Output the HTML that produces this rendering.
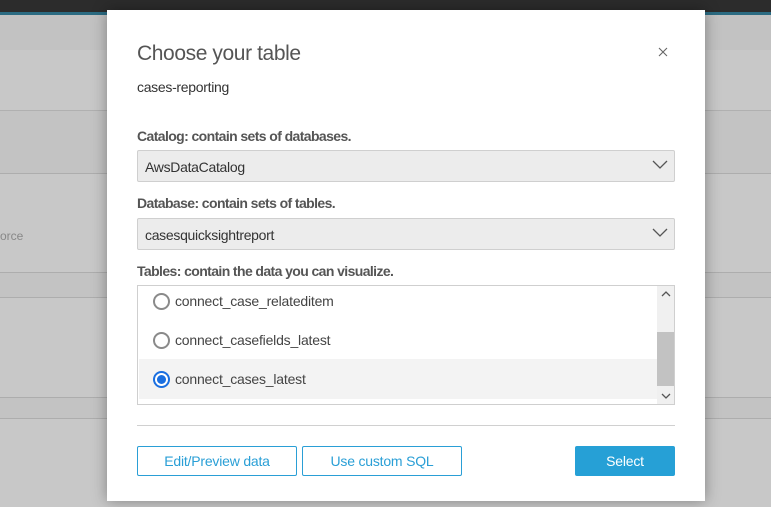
<!DOCTYPE html>
<html><head><meta charset="utf-8"><style>
*{margin:0;padding:0;box-sizing:border-box}
body{width:771px;height:507px;overflow:hidden;position:relative;background:#c8c8c8;font-family:"Liberation Sans",sans-serif;color:#444}
.a{position:absolute}
.sel{position:absolute;left:137px;width:538px;height:32px;background:#ececec;border:1px solid #cfcfcf;border-radius:2px;font-size:14px;color:#333;padding:8px 7px;letter-spacing:-0.3px}
.lbl{position:absolute;left:137px;font-size:14px;font-weight:bold;color:#555;letter-spacing:-0.6px}
.chev{position:absolute;right:6px;top:9px}
.row{position:absolute;left:1px;width:519px;height:40px;font-size:14px;color:#444;padding:0 0 0 36px;line-height:40px;letter-spacing:-0.2px}
.rad{position:absolute;left:14px;top:12px;width:17px;height:17px;border-radius:50%;border:2px solid #8a8a8a;background:#fff}
.btn{position:absolute;top:446px;height:30px;border:1px solid #2a9fd6;border-radius:2px;color:#2a9fd6;font-size:14px;text-align:center;line-height:28px;background:#fff;letter-spacing:-0.2px}
</style></head><body>
<div class="a" style="left:0;top:0;width:771px;height:12px;background:#2c2c2c"></div>
<div class="a" style="left:0;top:12px;width:771px;height:3px;background:#2b6b82"></div>
<div class="a" style="left:0;top:15px;width:771px;height:35px;background:#c2c2c2"></div>
<div class="a" style="left:0;top:110px;width:771px;height:63px;background:#c3c3c3;border-top:1px solid #b0b0b0"></div>
<div class="a" style="left:0;top:173px;width:771px;height:1px;background:#adadad"></div>
<div class="a" style="left:0;top:272px;width:771px;height:26px;background:#c3c3c3;border-top:1px solid #adadad;border-bottom:1px solid #adadad"></div>
<div class="a" style="left:0;top:397px;width:771px;height:22px;background:#c3c3c3;border-top:1px solid #adadad;border-bottom:1px solid #adadad"></div>
<div class="a" style="left:0;top:229px;font-size:12px;color:#888">orce</div>
<div class="a" style="left:107px;top:10px;width:598px;height:491px;background:#fff;box-shadow:0 0 14px rgba(0,0,0,.35)">
</div>
<div class="a" style="left:137px;top:42px;font-size:21px;color:#555;letter-spacing:-0.4px">Choose your table</div>
<svg class="a" style="left:658px;top:47px" width="10" height="10"><path d="M1 1L9 9M9 1L1 9" stroke="#666" stroke-width="1.1"/></svg>
<div class="a" style="left:137px;top:79px;font-size:14px;color:#333;letter-spacing:-0.3px">cases-reporting</div>
<div class="lbl" style="top:128px">Catalog: contain sets of databases.</div>
<div class="sel" style="top:150px">AwsDataCatalog<svg class="chev" width="16" height="10"><path d="M1 1L8 8L15 1" stroke="#555" fill="none" stroke-width="1.3"/></svg></div>
<div class="lbl" style="top:195px">Database: contain sets of tables.</div>
<div class="sel" style="top:218px">casesquicksightreport<svg class="chev" width="16" height="10"><path d="M1 1L8 8L15 1" stroke="#555" fill="none" stroke-width="1.3"/></svg></div>
<div class="lbl" style="top:263px">Tables: contain the data you can visualize.</div>
<div class="a" style="left:137px;top:285px;width:538px;height:120px;border:1px solid #cfcfcf;overflow:hidden">
<div class="row" style="top:-5px">
<span class="rad"></span>connect_case_relateditem</div>
<div class="row" style="top:34px"><span class="rad"></span>connect_casefields_latest</div>
<div class="row" style="top:73px;background:#f3f3f3"><span class="rad" style="border-color:#1a6fe0"><span style="position:absolute;left:2px;top:2px;width:9px;height:9px;border-radius:50%;background:#1a6fe0"></span></span>connect_cases_latest</div>
<div class="a" style="left:519px;top:0;width:17px;height:118px;background:#f0f0f0"></div>
<div class="a" style="left:519px;top:46px;width:17px;height:54px;background:#c2c2c2"></div>
<svg class="a" style="left:523px;top:4px" width="10" height="7"><path d="M1 6L5 2L9 6" stroke="#555" fill="none" stroke-width="1.3"/></svg>
<svg class="a" style="left:523px;top:107px" width="10" height="7"><path d="M1 1L5 5L9 1" stroke="#555" fill="none" stroke-width="1.3"/></svg>
</div>
<div class="a" style="left:137px;top:425px;width:538px;height:1px;background:#d0d0d0"></div>
<div class="btn" style="left:137px;width:160px">Edit/Preview data</div>
<div class="btn" style="left:302px;width:160px">Use custom SQL</div>
<div class="btn" style="left:575px;width:100px;background:#26a0d6;border-color:#26a0d6;color:#fff">Select</div>
</body></html>
